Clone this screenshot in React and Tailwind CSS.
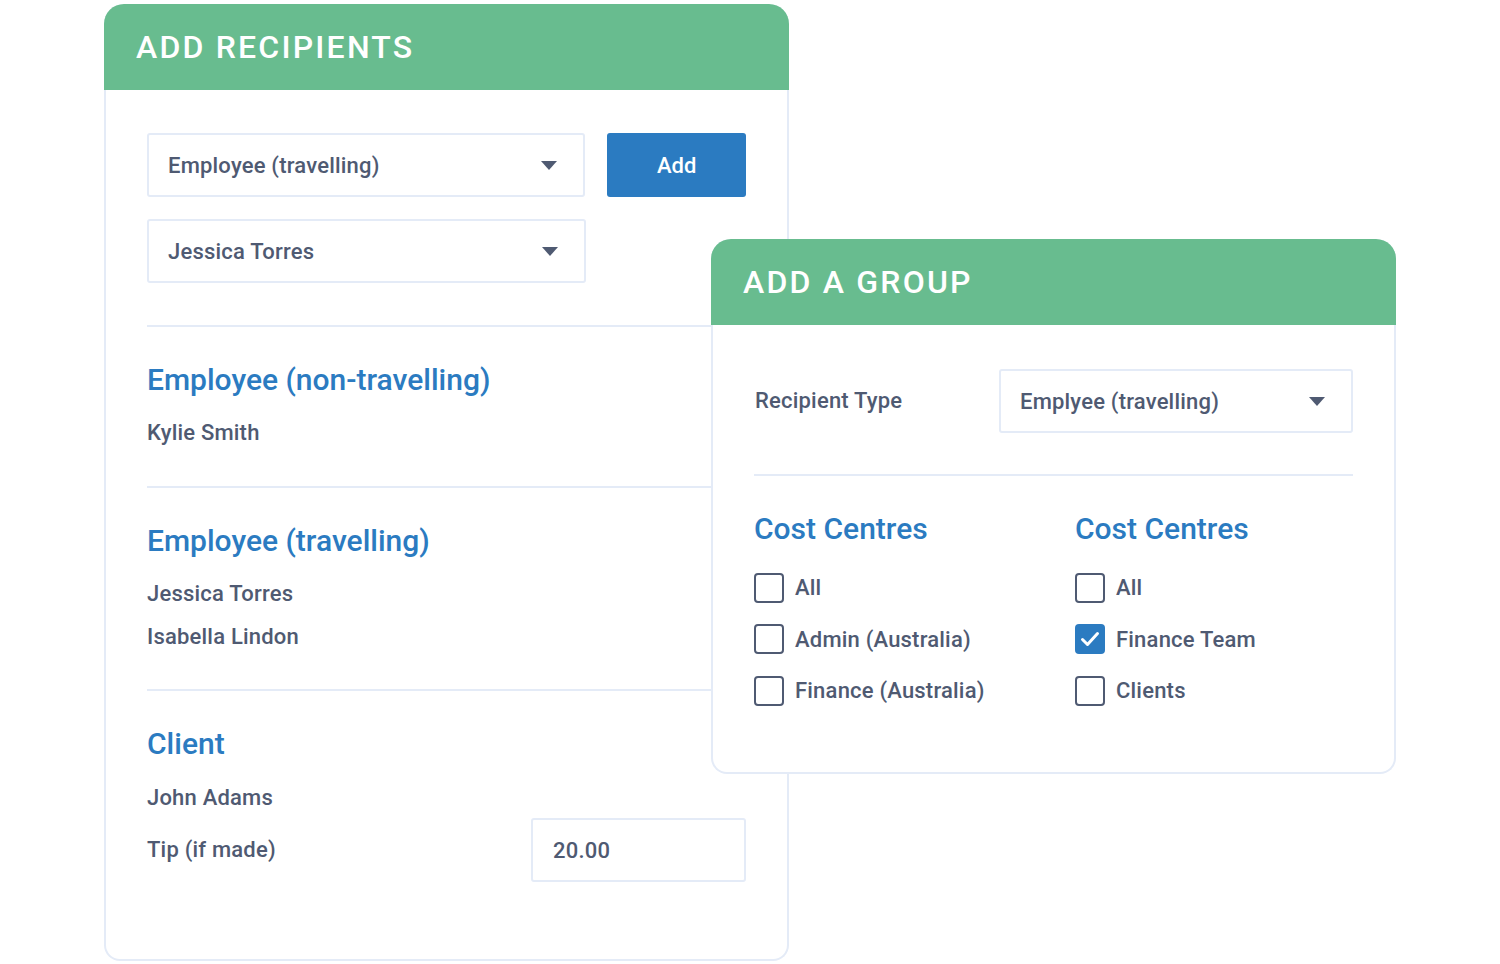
const textColor = "text-[#4f5a72]";

function Caret() {
  return (
    <svg width="16" height="9" viewBox="0 0 16 9" className="shrink-0">
      <path d="M0 0h16L8 9z" fill="#4f5a72" />
    </svg>
  );
}

function SelectBox({ value, className }) {
  return (
    <div
      className={`flex h-[64px] items-center justify-between rounded-[3px] border-2 border-[#e4ebf7] bg-white pl-[19px] pr-[26px] text-[22px] font-medium tracking-[0.2px] ${textColor} ${className}`}
    >
      <span>{value}</span>
      <Caret />
    </div>
  );
}

function Checkbox({ label, checked }) {
  return (
    <div className="flex h-[51.5px] items-center gap-[11px]">
      {checked ? (
        <div className="flex h-[30px] w-[30px] items-center justify-center rounded-[4px] bg-[#2b7bc1]">
          <svg width="20" height="16" viewBox="0 0 20 16">
            <path d="M2.5 8.5l5 5L17.5 2.5" fill="none" stroke="white" strokeWidth="3" strokeLinecap="round" strokeLinejoin="round" />
          </svg>
        </div>
      ) : (
        <div className="h-[30px] w-[30px] rounded-[4px] border-2 border-[#4f5a72] bg-white" />
      )}
      <span className={`text-[22px] font-medium tracking-[0.2px] ${textColor}`}>{label}</span>
    </div>
  );
}

function CardHeader({ title }) {
  return (
    <div className="flex h-[86px] items-center rounded-t-[20px] bg-[#68bc8f] px-[32px]">
      <h2 className="text-[32px] font-medium tracking-[2.2px] text-white">{title}</h2>
    </div>
  );
}

const body = `text-[22px] font-medium leading-[28px] tracking-[0.2px] ${textColor}`;
const heading = "text-[30px] font-medium leading-[40px] text-[#2b7bc1]";

export default function App() {
  return (
    <div
      className="relative h-[964px] w-[1500px] overflow-hidden bg-white"
      style={{ fontFamily: "Roboto, 'Liberation Sans', sans-serif" }}
    >
      {/* Add recipients card */}
      <div className="ml-[104px] mt-[4px] flex h-[957px] w-[685px] flex-col rounded-[20px] rounded-b-[16px] border-2 border-t-0 border-[#e4ebf7] bg-white">
        <div className="-mx-[2px]">
          <CardHeader title="ADD RECIPIENTS" />
        </div>
        <div className="px-[41px] pt-[43px]">
          <div className="flex gap-[22px]">
            <SelectBox value="Employee (travelling)" className="w-[439px]" />
            <button className="h-[64px] w-[139px] rounded-[3px] bg-[#2b7bc1] text-[22px] font-medium text-white">
              Add
            </button>
          </div>
          <SelectBox value="Jessica Torres" className="mt-[22px] w-[439px]" />

          <div className="mt-[42px] border-t-2 border-[#e4ebf7]" />
          <div className="pt-[33px] pb-[39px]">
            <h3 className={heading}>Employee (non-travelling)</h3>
            <p className={`mt-[19px] ${body}`}>Kylie Smith</p>
          </div>

          <div className="border-t-2 border-[#e4ebf7]" />
          <div className="pt-[33px] pb-[38px]">
            <h3 className={heading}>Employee (travelling)</h3>
            <p className={`mt-[19px] ${body}`}>Jessica Torres</p>
            <p className={`mt-[15px] ${body}`}>Isabella Lindon</p>
          </div>

          <div className="border-t-2 border-[#e4ebf7]" />
          <div className="pt-[33px]">
            <h3 className={heading}>Client</h3>
            <p className={`mt-[20px] ${body}`}>John Adams</p>
            <div className="mt-[6px] flex items-center justify-between">
              <span className={body}>Tip (if made)</span>
              <div
                className={`flex h-[64px] w-[215px] items-center rounded-[3px] border-2 border-[#e4ebf7] pl-[20px] text-[22px] font-medium tracking-[0.2px] ${textColor}`}
              >
                20.00
              </div>
            </div>
          </div>
        </div>
      </div>

      {/* Add a group card, overlapping */}
      <div className="absolute left-[711px] top-[239px] flex h-[535px] w-[685px] flex-col rounded-[20px] rounded-b-[16px] border-2 border-t-0 border-[#e4ebf7] bg-white">
        <div className="-mx-[2px]">
          <CardHeader title="ADD A GROUP" />
        </div>
        <div className="px-[41px] pt-[44px]">
          <div className="flex items-center justify-between">
            <span className={`pl-[1px] ${body}`}>Recipient Type</span>
            <SelectBox value="Emplyee (travelling)" className="w-[354px]" />
          </div>
          <div className="mt-[41px] border-t-2 border-[#e4ebf7]" />
          <div className="mt-[33px] grid grid-cols-[321px_1fr]">
            <div>
              <h3 className={heading}>Cost Centres</h3>
              <div className="mt-[13px]">
                <Checkbox label="All" />
                <Checkbox label="Admin (Australia)" />
                <Checkbox label="Finance (Australia)" />
              </div>
            </div>
            <div>
              <h3 className={heading}>Cost Centres</h3>
              <div className="mt-[13px]">
                <Checkbox label="All" />
                <Checkbox label="Finance Team" checked />
                <Checkbox label="Clients" />
              </div>
            </div>
          </div>
        </div>
      </div>
    </div>
  );
}
